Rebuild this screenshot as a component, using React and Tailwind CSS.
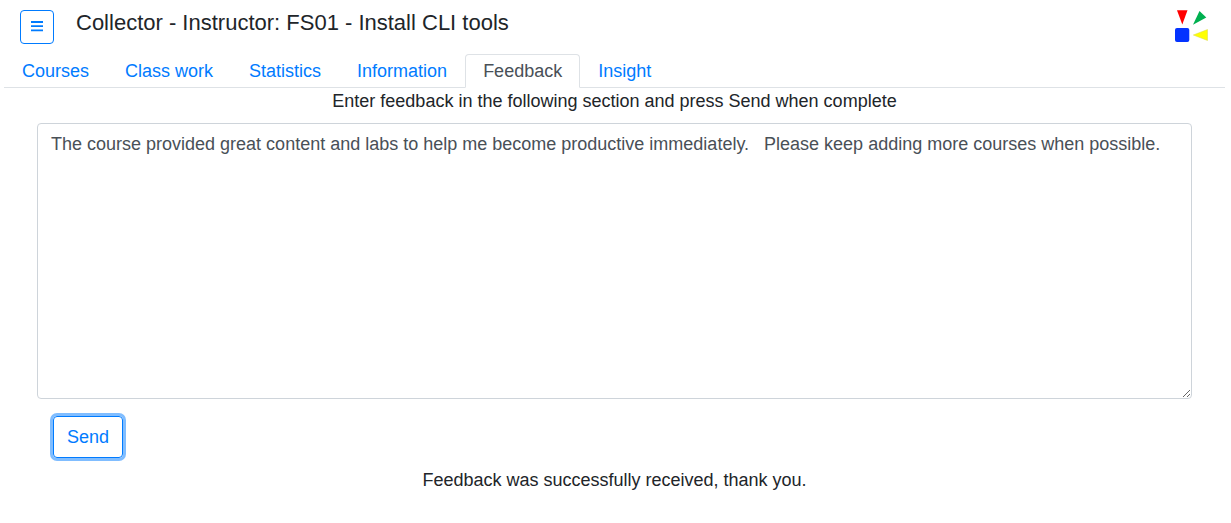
import { useState } from "react";

const tabs = ["Courses", "Class work", "Statistics", "Information", "Feedback", "Insight"];

function Logo() {
  return (
    <svg className="h-9 w-9" viewBox="0 0 36 36" role="img" aria-label="Collector logo">
      <path d="M4 2.200h10.500L9.300 16.500z" fill="#ff0000" />
      <path d="M26.500 3L33.300 9.500L20 16.800z" fill="#00b050" />
      <path d="M20.300 27L34.500 21.500v11z" fill="#ffff00" stroke="#d8d84a" strokeWidth="0.500" />
      <rect x="2" y="20" width="14.300" height="14" rx="2" fill="#0433ff" />
    </svg>
  );
}

export default function App() {
  const [active, setActive] = useState("Feedback");
  const [feedback, setFeedback] = useState(
    "The course provided great content and labs to help me become productive immediately.\u00a0\u00a0 Please keep adding more courses when possible."
  );

  return (
    <div className="bg-white px-1 pr-1.5 pt-2.5 font-['Liberation_Sans',Arial,sans-serif] text-lg leading-7 text-[#212529]">
      <header className="flex items-start px-4">
        <button
          type="button"
          aria-label="Open menu"
          className="flex h-[34px] w-[34px] items-center justify-center rounded border border-[#007bff] text-[#007bff]"
        >
          <svg className="h-3 w-3" viewBox="0 0 12 12" aria-hidden="true">
            <path d="M0 1h12M0 5.200h12M0 9.400h12" stroke="currentColor" strokeWidth="1.800" />
          </svg>
        </button>
        <h1 className="ml-[22px] grow text-[22px] leading-[26px]">
          Collector - Instructor: FS01 - Install CLI tools
        </h1>
        <div className="-mt-0.5">
          <Logo />
        </div>
      </header>

      <nav className="mt-2.5 flex border-b border-[#dee2e6]" aria-label="Sections">
        {tabs.map((tab) => (
          <a
            key={tab}
            href="#"
            aria-current={tab === active ? "page" : undefined}
            onClick={(event) => {
              event.preventDefault();
              setActive(tab);
            }}
            className={
              tab === active
                ? "-mb-px rounded-t border border-[#dee2e6] border-b-white bg-white px-[17px] py-0.5 text-[#495057]"
                : "-mb-px border border-transparent px-[17px] py-0.5 text-[#007bff]"
            }
          >
            {tab}
          </a>
        ))}
      </nav>

      <form className="px-[33px]" onSubmit={(event) => event.preventDefault()}>
        <label htmlFor="feedback" className="block text-center leading-[27px]">
          Enter feedback in the following section and press Send when complete
        </label>
        <textarea
          id="feedback"
          value={feedback}
          onChange={(event) => setFeedback(event.target.value)}
          className="mt-2 block h-[276px] w-full resize rounded border border-[#ced4da] px-[13px] py-1.5 text-[#495057]"
        />
        <button
          type="submit"
          className="ml-4 mt-[17px] h-[42px] rounded border border-[#007bff] px-[13px] text-[#007bff] shadow-[0_0_0_3px_#80bdff]"
        >
          Send
        </button>
        <p role="status" className="mt-2 text-center">
          Feedback was successfully received, thank you.
        </p>
      </form>
    </div>
  );
}
